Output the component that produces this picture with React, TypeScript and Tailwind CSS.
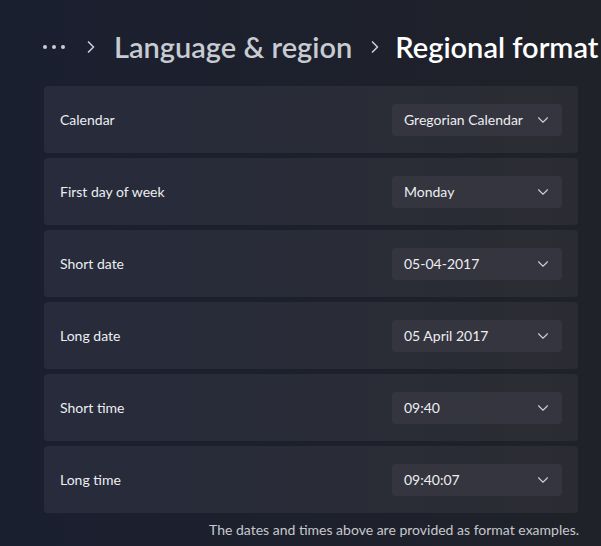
import React from 'react';
import { ChevronDown, ChevronRight } from 'lucide-react';

const rows = [
  { label: 'Calendar', value: 'Gregorian Calendar' },
  { label: 'First day of week', value: 'Monday' },
  { label: 'Short date', value: '05-04-2017' },
  { label: 'Long date', value: '05 April 2017' },
  { label: 'Short time', value: '09:40' },
  { label: 'Long time', value: '09:40:07' },
];

const App = () => {
  return (
    <div
      className="h-[546px] w-[601px] overflow-hidden bg-gradient-to-r from-[#1a1f30] to-[#202229] text-white"
      style={{ fontFamily: '"Segoe UI", Lato, "Noto Sans", sans-serif' }}
    >
      {/* Breadcrumb */}
      <div className="flex h-[86px] items-center whitespace-nowrap pl-[43px] pt-[8px]">
        <span className="flex shrink-0 gap-[5px]">
          <span className="h-[4px] w-[4px] rounded-full bg-[#c9ccd3]" />
          <span className="h-[4px] w-[4px] rounded-full bg-[#c9ccd3]" />
          <span className="h-[4px] w-[4px] rounded-full bg-[#c9ccd3]" />
        </span>
        <ChevronRight className="ml-[16px] h-[20px] w-[20px] shrink-0 text-[#c9ccd3]" strokeWidth={2} />
        <span className="ml-[13px] shrink-0 text-[29px] font-semibold text-[#c8cbd2]">Language &amp; region</span>
        <ChevronRight className="ml-[13px] h-[20px] w-[20px] shrink-0 text-[#c9ccd3]" strokeWidth={2} />
        <span className="ml-[10px] shrink-0 text-[29px] font-semibold text-white">Regional format</span>
      </div>

      {/* Settings rows */}
      <div className="ml-[44px] flex w-[534px] flex-col gap-[5px]">
        {rows.map(row => (
          <div
            key={row.label}
            className="flex h-[67px] items-center justify-between rounded-[4px] bg-gradient-to-r from-[#272b3b] to-[#2b2c33] pl-[16px] pr-[16px]"
          >
            <span className="text-[14px] text-[#eceef2]">{row.label}</span>
            <div className="flex h-[32px] w-[170px] items-center justify-between rounded-[4px] bg-[#34353e] pl-[12px] pr-[10px]">
              <span className="text-[14px] text-[#eceef2]">{row.value}</span>
              <ChevronDown className="h-[18px] w-[18px] shrink-0 text-[#c9ccd3]" strokeWidth={1.5} />
            </div>
          </div>
        ))}
      </div>

      <p className="mt-[6px] w-[579px] text-right text-[14px] text-[#c6c8cd]">
        The dates and times above are provided as format examples.
      </p>
    </div>
  );
};

export default App;
